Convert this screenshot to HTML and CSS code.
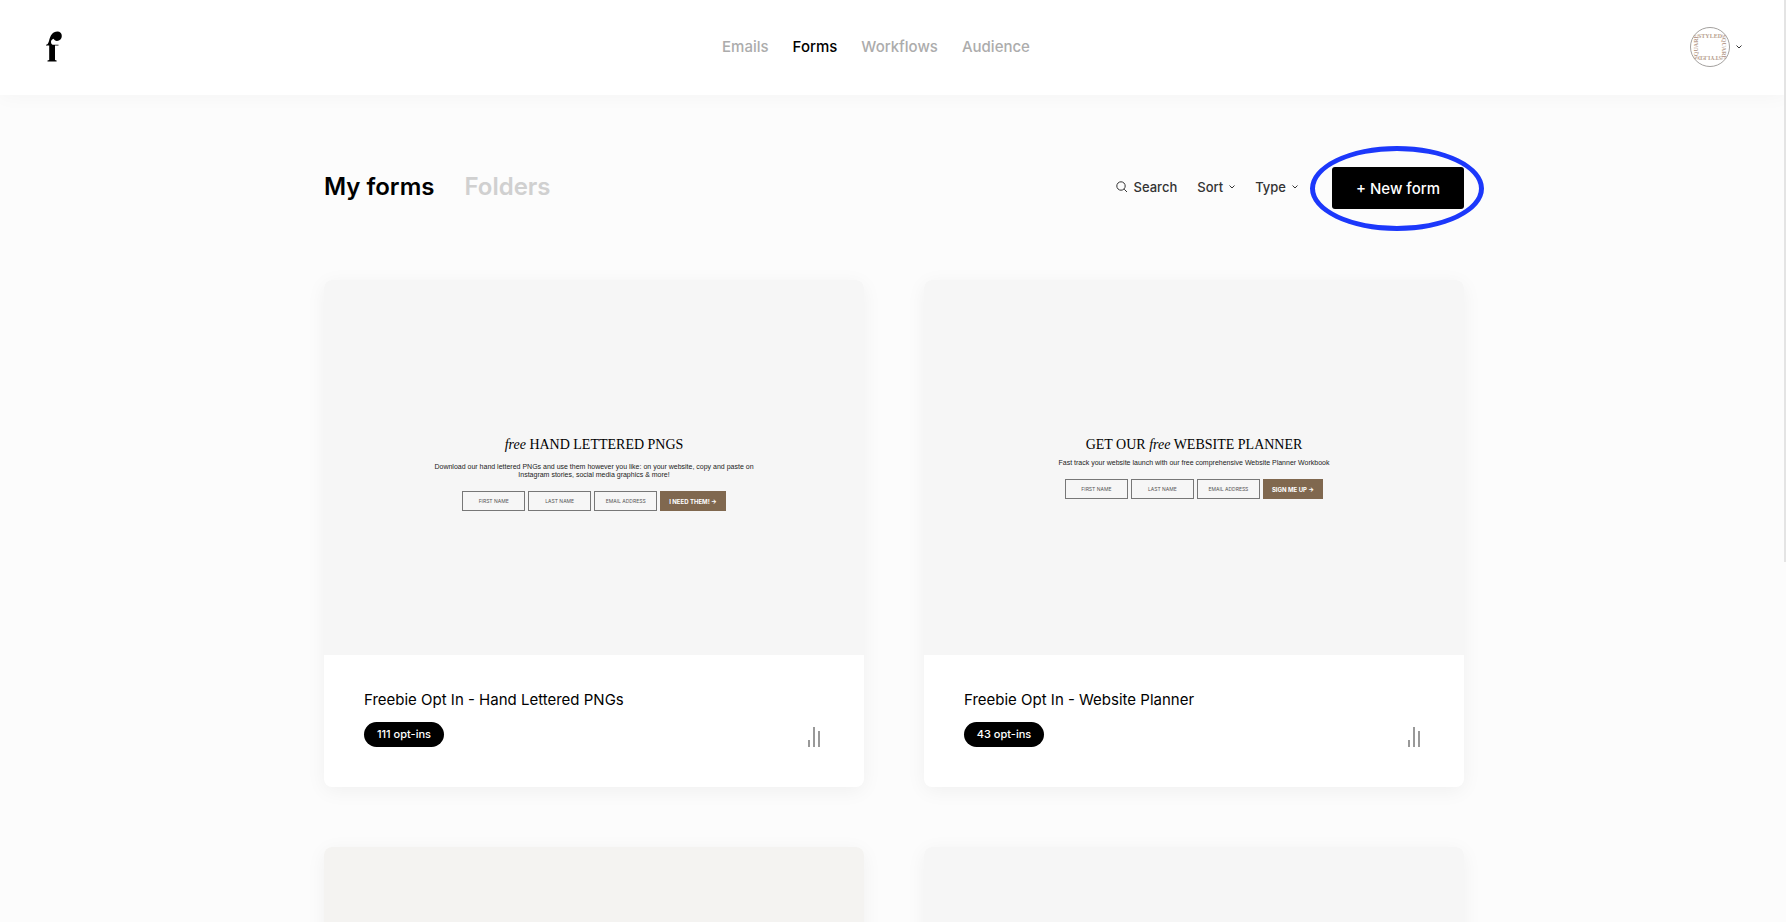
FILE: index.html
```html
<!DOCTYPE html>
<html lang="en">
<head>
<meta charset="utf-8">
<title>My forms</title>
<link rel="stylesheet" href="styles.css">
</head>
<body>
<header class="topbar">
  <a class="logo" href="#" aria-label="Home">
    <svg width="16" height="31" viewBox="0 0 16 31"><path d="M1.500 30.500V29.600L3.200 29V14.500H0V13.700C1.600 13.500 2.300 12.500 3 10C4.300 4.500 6.500 .5 11.500 .5C14 .5 15.800 2.200 15.800 5C15.800 8 13.800 9.900 11 9.900C9.300 9.900 8.200 9 7.500 7.800C5.400 8.400 4.600 10.500 5.200 12.200C5.700 13.300 6.500 13.700 7.500 13.700H12.500V14.500H9V29L10.600 29.600V30.500Z"/></svg>
  </a>
  <nav class="nav">
    <a href="#">Emails</a>
    <a href="#" class="active">Forms</a>
    <a href="#">Workflows</a>
    <a href="#">Audience</a>
  </nav>
  <button class="account" aria-label="Account menu">
    <svg class="avatar" width="40" height="40" viewBox="0 0 40 40">
      <circle cx="20" cy="20" r="19.500" fill="#fff" stroke="#a3a09e"/>
      <g class="avatar-text">
        <text x="20" y="11">STYLED</text>
        <text x="20" y="8" transform="rotate(90 20 20)">SQUARE</text>
        <text x="20" y="11" transform="rotate(180 20 20)">STYLED</text>
        <text x="20" y="8" transform="rotate(270 20 20)">SQUARE</text>
      </g>
    </svg>
    <svg class="chevron" width="6" height="4" viewBox="0 0 6 4"><path d="M.5 .5L3 3L5.500 .5"/></svg>
  </button>
</header>
<main class="page">
  <div class="toolbar">
    <h1 class="tab active">My forms</h1>
    <a href="#" class="tab">Folders</a>
    <div class="actions">
      <button class="tool"><svg class="search-icon" width="12" height="12" viewBox="0 0 12 12"><circle cx="5" cy="5" r="4.200"/><path d="M8.200 8.200L11 11"/></svg>Search</button>
      <button class="tool">Sort<svg class="chevron" width="6" height="4" viewBox="0 0 6 4"><path d="M.5 .5L3 3L5.500 .5"/></svg></button>
      <button class="tool">Type<svg class="chevron" width="6" height="4" viewBox="0 0 6 4"><path d="M.5 .5L3 3L5.500 .5"/></svg></button>
      <div class="new-wrap">
        <button class="new-form">+ New form</button>
        <span class="highlight"></span>
      </div>
    </div>
  </div>
  <div class="cards">
    <article class="card">
      <div class="preview">
        <h2><i>free</i> HAND LETTERED PNGS</h2>
        <p class="spaced">Download our hand lettered PNGs and use them however you like: on your website, copy and paste on Instagram stories, social media graphics &amp; more!</p>
        <form class="optin">
          <input type="text" placeholder="FIRST NAME" aria-label="First name">
          <input type="text" placeholder="LAST NAME" aria-label="Last name">
          <input type="text" placeholder="EMAIL ADDRESS" aria-label="Email address">
          <button type="button">I NEED THEM! →</button>
        </form>
      </div>
      <div class="info">
        <div>
          <h3>Freebie Opt In - Hand Lettered PNGs</h3>
          <span class="pill">111 opt-ins</span>
        </div>
        <button class="stats" aria-label="Statistics"><svg width="13" height="20" viewBox="0 0 13 20"><path d="M1 13V20M6 0V20M11 4V20"/></svg></button>
      </div>
    </article>
    <article class="card">
      <div class="preview">
        <h2>GET OUR <i>free</i> WEBSITE PLANNER</h2>
        <p>Fast track your website launch with our free comprehensive Website Planner Workbook</p>
        <form class="optin">
          <input type="text" placeholder="FIRST NAME" aria-label="First name">
          <input type="text" placeholder="LAST NAME" aria-label="Last name">
          <input type="text" placeholder="EMAIL ADDRESS" aria-label="Email address">
          <button type="button">SIGN ME UP →</button>
        </form>
      </div>
      <div class="info">
        <div>
          <h3>Freebie Opt In - Website Planner</h3>
          <span class="pill">43 opt-ins</span>
        </div>
        <button class="stats" aria-label="Statistics"><svg width="13" height="20" viewBox="0 0 13 20"><path d="M1 13V20M6 0V20M11 4V20"/></svg></button>
      </div>
    </article>
    <article class="card"><div class="preview warm"></div></article>
    <article class="card"><div class="preview"></div></article>
  </div>
</main>
<div class="scroll-thumb"></div>
</body>
</html>
```

FILE: styles.css
```css
* { box-sizing: border-box; }

body {
  margin: 0;
  height: 100vh;
  overflow: hidden;
  position: relative;
  background: #fcfcfc;
  color: #000;
  font-family: Inter, "Liberation Sans", sans-serif;
}

a { color: inherit; text-decoration: none; }
h1, h2, h3, p { margin: 0; }
button {
  font: inherit;
  color: inherit;
  background: none;
  border: 0;
  padding: 0;
}

.topbar {
  display: grid;
  grid-template-columns: 1fr auto 1fr;
  align-items: center;
  height: 95px;
  padding: 0 44px 2px 46px;
  background: #fff;
  box-shadow: 0 0 20px rgba(0, 0, 0, 0.04);
}
.logo svg { display: block; }
.nav {
  display: flex;
  gap: 24px;
  margin-right: 36px;
  font-size: 15px;
  font-weight: 500;
  color: #acacac;
}
.nav .active { color: #000; }
.account {
  display: flex;
  align-items: center;
  gap: 6px;
  justify-self: end;
}
.avatar-text {
  font-family: "Liberation Serif", serif;
  font-size: 6px;
  font-weight: 700;
  fill: #b89f90;
  text-anchor: middle;
}
.chevron, .search-icon {
  fill: none;
  stroke: #333;
  stroke-width: 1;
}

.page {
  max-width: 1142px;
  margin: 0 auto;
  padding: 72px 0 0 2px;
}
.toolbar {
  display: flex;
  align-items: center;
  gap: 30px;
  height: 42px;
}
.tab {
  padding-bottom: 2px;
  font-size: 24px;
  font-weight: 600;
  line-height: 32px;
  color: #d0d0d0;
}
.tab.active { color: #000; }
.actions {
  display: flex;
  align-items: center;
  gap: 20px;
  margin-left: auto;
}
.tool {
  display: flex;
  align-items: center;
  gap: 6px;
  padding-bottom: 2px;
  font-size: 13px;
  font-weight: 500;
  color: #333;
}
.new-wrap { position: relative; margin-left: 14px; }
.new-form {
  display: block;
  width: 132px;
  height: 42px;
  border-radius: 3px;
  background: #000;
  color: #fff;
  font-size: 15px;
  font-weight: 500;
}
.highlight {
  position: absolute;
  inset: -21px -20px -22px -22px;
  border: 5px solid #1c38fb;
  border-radius: 50%;
  pointer-events: none;
}

.cards {
  display: grid;
  grid-template-columns: 1fr 1fr;
  gap: 60px;
  margin-top: 71px;
}
.card {
  border-radius: 8px;
  background: #fff;
  box-shadow: 0 4px 20px rgba(0, 0, 0, 0.05);
  overflow: hidden;
}
.preview {
  display: flex;
  flex-direction: column;
  align-items: center;
  height: 375px;
  padding-top: 154px;
  background: #f6f6f6;
  text-align: center;
}
.preview.warm { background: #f4f3f1; }
.preview h2 {
  font-family: "Liberation Serif", serif;
  font-size: 14px;
  font-weight: 400;
  line-height: 22px;
}
.preview p {
  max-width: 330px;
  margin-top: 3px;
  font-family: "Liberation Sans", sans-serif;
  font-size: 7px;
  line-height: 8px;
  color: #222;
}
.preview .spaced { margin-top: 7px; }
.optin {
  display: flex;
  gap: 3px;
  margin-top: 12px;
}
.optin input {
  width: 63px;
  height: 20px;
  padding: 0;
  border: 1px solid #777;
  border-radius: 0;
  background: transparent;
  font-family: inherit;
  font-size: 5px;
  text-align: center;
}
.optin input::placeholder { color: #555; opacity: 1; }
.optin button {
  height: 20px;
  padding: 0 9px;
  background: #80684f;
  color: #fff;
  font-size: 6px;
  font-weight: 700;
}
.info {
  display: flex;
  align-items: flex-end;
  justify-content: space-between;
  height: 132px;
  padding: 0 43px 40px 40px;
}
.info h3 {
  margin-bottom: 12px;
  font-size: 15px;
  font-weight: 400;
  line-height: 20px;
}
.pill {
  display: block;
  width: 80px;
  border-radius: 13px;
  background: #000;
  color: #fff;
  font-size: 11px;
  font-weight: 500;
  line-height: 25px;
  text-align: center;
}
.stats svg {
  display: block;
  fill: none;
  stroke: #999;
  stroke-width: 2;
}
.scroll-thumb {
  position: absolute;
  top: 0;
  right: 0;
  width: 2px;
  height: 61%;
  background: #e4e4e4;
}
```
